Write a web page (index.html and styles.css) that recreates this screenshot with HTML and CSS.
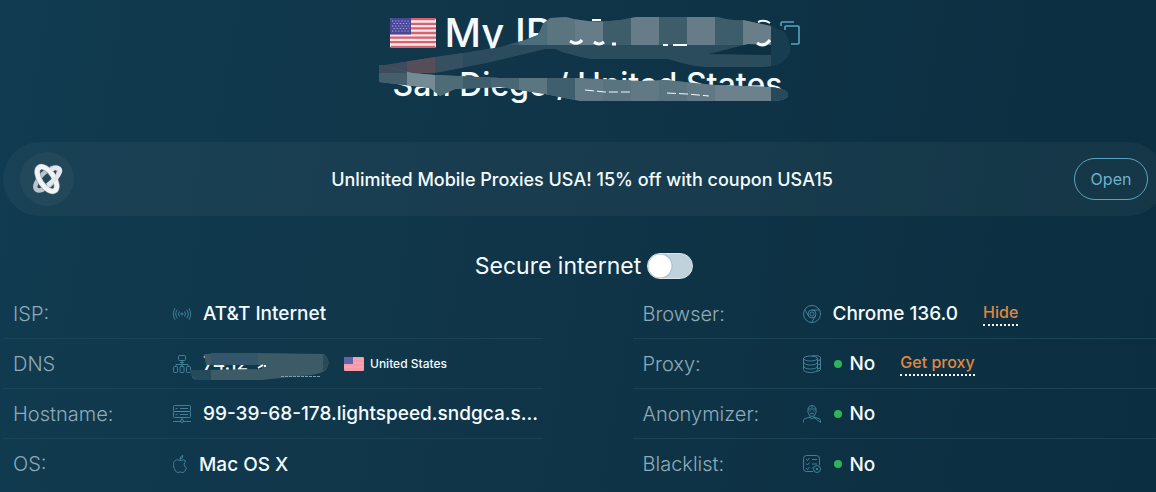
FILE: index.html
```html
<!DOCTYPE html>
<html lang="en">
<head>
    <meta charset="UTF-8">
    <meta name="viewport" content="width=device-width, initial-scale=1.0">
    <title>My IP</title>
    <link rel="stylesheet" href="styles.css">
</head>
<body>
    <svg class="defs" aria-hidden="true">
        <symbol id="flag" viewBox="0 0 46 30">
            <rect width="46" height="30" rx="2" fill="#f6e9ee"/>
            <path d="M1 1.2h44M0 5.8h46M0 10.4h46M0 15h46M0 19.6h46M0 24.2h46M1 28.8h44" stroke="#dc5f6c" stroke-width="2.3"/>
            <path d="M2 0h19v16.5H0V2Q0 0 2 0z" fill="#48479a"/>
            <path d="M2 3h18M3.500 5.500h16M2 8h18M3.500 10.500h16M2 13h18" stroke="#b9b8dc" stroke-width="1.100" stroke-dasharray="1.200 1.900"/>
        </symbol>
    </svg>
    <main class="page">
        <header class="hero">
            <h1 class="title">
                <svg class="flag" aria-hidden="true"><use href="#flag"/></svg>
                <span class="title-text">My IP</span>
                <button class="copy" type="button" aria-label="Copy">
                    <svg viewBox="0 0 20 24" fill="none" stroke="#5ba3bd" stroke-width="1.600">
                        <path d="M1 5V2q0-1 1-1h12M5 9V6q0-1 1-1h12q1 0 1 1v16q0 1-1 1h-7"/>
                    </svg>
                </button>
            </h1>
            <p class="location">San Diego / United States</p>
            <svg class="smear" viewBox="376 0 424 115" aria-hidden="true">
                <clipPath id="arm">
                    <path d="M379 66L435 57L470 52L500 47L522 41L538 35L543 24L550 18L566 17Q590 24 620 20L636 17H718Q732 21 743 20L771 26L784 32Q792 44 789 54Q782 67 760 67H705Q690 66 668 59H590Q565 54 555 49L545 49L491 62L435 73L379 75z"/>
                </clipPath>
                <clipPath id="band">
                    <path d="M379 65L412 73L435 75L500 78H580L640 81L665 80L715 85L771 87Q789 89 788 96Q786 101 771 101H580L545 94L500 87L455 89L440 96L430 88L379 82z"/>
                </clipPath>
                <g clip-path="url(#arm)">
                    <path d="M376 10h424v70H376z" fill="#2b4c5c"/>
                    <path d="M379 45h28v28h-28z" fill="#3c4c5c"/>
                    <path d="M407 45h28v28h-28z" fill="#574d59"/>
                    <path d="M435 45h28v28h-28z" fill="#345061"/>
                    <path d="M463 45h28v28h-28z" fill="#2c4b5e"/>
                    <path d="M491 17h28v28h-28z" fill="#365767"/>
                    <path d="M519 17h28v28h-28z" fill="#4c6d7a"/>
                    <path d="M547 17h28v28h-28z" fill="#5a7480"/>
                    <path d="M575 17h28v28h-28zM631 17h28v28h-28zM687 17h28v28h-28z" fill="#667d89"/>
                    <path d="M603 17h28v28h-28zM659 17h28v28h-28zM715 17h28v28h-28z" fill="#3e5d6b"/>
                    <path d="M743 17h28v28h-28z" fill="#687f8a"/>
                    <path d="M771 17h28v55h-28z" fill="#173d51"/>
                    <path d="M709 54L748 44L771 45V55z" fill="#0e3043"/>
                </g>
                <g clip-path="url(#band)">
                    <path d="M376 60h424v50H376z" fill="#617985"/>
                    <path d="M379 60h28v45h-28z" fill="#455e6b"/>
                    <path d="M379 60h28v13h-28z" fill="#3c4c5c"/>
                    <path d="M407 60h28v45h-28z" fill="#738b95"/>
                    <path d="M435 60h28v45h-28z" fill="#4e6c78"/>
                    <path d="M463 60h28v45h-28z" fill="#3e5e6c"/>
                    <path d="M491 60h28v45h-28z" fill="#496675"/>
                    <path d="M519 60h28v45h-28z" fill="#5b7581"/>
                    <path d="M547 60h28v45h-28z" fill="#405f6e"/>
                    <path d="M603 60h28v45h-28zM659 60h28v45h-28z" fill="#59737f"/>
                    <path d="M715 60h56v45h-56z" fill="#6b818c"/>
                    <path d="M771 60h28v45h-28z" fill="#28495a"/>
                </g>
                <g fill="none" stroke="#f4fbff">
                    <path d="M570 41l4 2q5 1 8-3M594 42q5 4 10 0M612 44h4M757 43q7 5 13-3" stroke-width="3"/>
                    <path d="M663 45h5M673 45h14M758 22q6-3 12 1M592 20h9" stroke-width="2"/>
                    <path d="M585 90l20 2l26-0M667 93l20 1l22 2" stroke-dasharray="9 3"/>
                </g>
            </svg>
        </header>

        <section class="promo">
            <span class="promo-logo">
                <svg viewBox="0 0 32 32" fill="none" aria-hidden="true">
                    <g transform="rotate(46 16 16)">
                        <ellipse cx="16" cy="16" rx="6.500" ry="15" stroke="#bcc4cb" stroke-width="4.500"/>
                    </g>
                    <g transform="rotate(-34 16 16)">
                        <ellipse cx="16" cy="16" rx="7" ry="14" stroke="#8d9ba6" stroke-width="6"/>
                        <ellipse cx="16" cy="16" rx="7" ry="14" stroke="#f1f3f6" stroke-width="4.800"/>
                    </g>
                    <path d="M16.500 22.500L25 15Q31 8 28 5.500Q25 3.500 20 7" stroke="#e3e7eb" stroke-width="4.500"/>
                </svg>
            </span>
            <p class="promo-text">Unlimited Mobile Proxies USA! 15% off with coupon USA15</p>
            <a class="open" href="#">Open</a>
        </section>

        <label class="secure">
            <span>Secure internet</span>
            <input class="toggle" type="checkbox" role="switch">
        </label>

        <div class="info">
            <dl class="list">
                <div class="row">
                    <dt>ISP:</dt>
                    <dd>
                        <svg class="icon" viewBox="0 0 18 18">
                            <circle cx="9" cy="9" r="1"/>
                            <path d="M6.500 6.500q-2 2.500 0 5M11.500 6.500q2 2.500 0 5M4.300 4.800q-3.200 4.200 0 8.400M13.700 4.800q3.200 4.200 0 8.400M2 3.300q-3.300 5.700 0 11.400M16 3.300q3.300 5.700 0 11.400"/>
                        </svg>
                        <span class="value">AT&amp;T Internet</span>
                    </dd>
                </div>
                <div class="row">
                    <dt>DNS</dt>
                    <dd>
                        <svg class="icon" viewBox="0 0 18 18">
                            <rect x="5.500" y=".5" width="7" height="5" rx="1"/>
                            <path d="M7 7.500h4M9 5.500v6M3 11.500v-2h12v2"/>
                            <rect x=".5" y="11.500" width="4" height="6" rx="1"/>
                            <rect x="7" y="11.500" width="4" height="6" rx="1"/>
                            <rect x="13.500" y="11.500" width="4" height="6" rx="1"/>
                        </svg>
                        <span class="dns">
                            <span class="value">74.12</span>
                            <svg class="dns-smear" viewBox="190 350 140 34" aria-hidden="true">
                                <path d="M204 355L258 354L324 355Q332 362 326 371Q320 376 300 377L262 381H200Q190 381 192 375L204 371L262 370V366L206 366z" fill="#3d5a67"/>
                                <path d="M211 354h47v12h-47z" fill="#34566a"/>
                                <path d="M190 371h21v10h-14q-7-4-7-10z" fill="#254a5c"/>
                                <path d="M323 355q11 8 0 18z" fill="#2a4a59"/>
                                <path d="M258 369l5-3M264 367h2" fill="none" stroke="#f4fbff" stroke-width="2"/>
                                <path d="M281 377.500h40" stroke="#7da0b0" stroke-dasharray="3 1"/>
                            </svg>
                        </span>
                        <svg class="flag-small" aria-hidden="true" viewBox="0 0 20 14">
                            <rect width="20" height="14" rx="1" fill="#f59aa8"/>
                            <path d="M0 2h20M0 6h20M0 10h20" stroke="#f4adba"/>
                            <path d="M0 0h9v7H0z" fill="#6462ad"/>
                        </svg>
                        <span class="country">United States</span>
                    </dd>
                </div>
                <div class="row">
                    <dt>Hostname:</dt>
                    <dd>
                        <svg class="icon" viewBox="0 0 18 18">
                            <rect x=".5" y=".5" width="17" height="6" rx="1"/>
                            <rect x=".5" y="6.500" width="17" height="6" rx="1"/>
                            <path d="M2.500 3.500h2M2.500 9.500h2M7 3.500h8M7 9.500h8M9 12.500v2M0 16.500h7.500M10.500 16.500H18"/>
                            <circle cx="9" cy="16" r="1.500"/>
                        </svg>
                        <span class="value">99-39-68-178.lightspeed.sndgca.s…</span>
                    </dd>
                </div>
                <div class="row">
                    <dt>OS:</dt>
                    <dd>
                        <svg class="icon icon-apple" viewBox="0 0 14 18">
                            <path d="M7 5.500C5 4.500 3.500 4.500 2.200 5.500C-.2 7.500.2 11.500 1.700 14.500C3 17 4 17.800 5.200 17.400Q7.200 16.500 9 17.400C10.300 17.800 11.300 17 12.300 15.300Q13.200 13.800 13.400 12.800Q11 11.500 11.100 9.200Q11.300 7.300 12.900 6.300Q10.900 3.700 7 5.500zM7 4.200Q6.800 1.300 9.800.5Q10 3.500 7 4.200z"/>
                        </svg>
                        <span class="value">Mac OS X</span>
                    </dd>
                </div>
            </dl>
            <dl class="list">
                <div class="row">
                    <dt>Browser:</dt>
                    <dd>
                        <svg class="icon" viewBox="0 0 18 18">
                            <circle cx="9" cy="9" r="8.500"/>
                            <circle cx="9" cy="9" r="4"/>
                            <circle cx="9" cy="9" r="2"/>
                            <path d="M9 5h7.500M5.500 11L1.800 4.700M12.500 11L8.500 17.500"/>
                        </svg>
                        <span class="value">Chrome 136.0</span>
                        <a class="action" href="#">Hide</a>
                    </dd>
                </div>
                <div class="row">
                    <dt>Proxy:</dt>
                    <dd>
                        <svg class="icon" viewBox="0 0 18 18">
                            <ellipse cx="7.500" cy="3.500" rx="7" ry="2.500"/>
                            <path d="M.5 3.500v11c0 4 14 4 14 0v-11M.5 7c0 4 14 4 14 0M.5 11c0 4 14 4 14 0M9 1q8-1 8.500 1.500v12q-1 2-4 2M14.500 6q3-.5 3-2M14.500 10q3-.5 3-2M14.500 14q3-.5 3-2"/>
                        </svg>
                        <span class="value status">No</span>
                        <a class="action" href="#">Get proxy</a>
                    </dd>
                </div>
                <div class="row">
                    <dt>Anonymizer:</dt>
                    <dd>
                        <svg class="icon" viewBox="0 0 18 18">
                            <path d="M5 3.500Q6 .5 9 .5t4 3v4Q12 11.500 9 11.500T5 7.500zM5 4h8M6.500 6h1.500M10 6h1.500M7 9q2-1.500 4 0M9 1v2M7 11v1.500l2 1.500 2-1.500V11M.5 17.500v-2Q1 13 4 13l3-.7M11 12.300l3 .7q3 0 3.500 2.500v2z"/>
                        </svg>
                        <span class="value status">No</span>
                    </dd>
                </div>
                <div class="row">
                    <dt>Blacklist:</dt>
                    <dd>
                        <svg class="icon" viewBox="0 0 18 18">
                            <path d="M10 16.500H3.500q-3 0-3-3v-10q0-3 3-3h10q3 0 3 3V10M3 4l1.500 1.500L6.500 3M3 8.500L4.500 10l2-2.500M3 13l1.500 1.500 2-2.500M9 4.500h5M9 9h5M9 13h1"/>
                            <circle cx="14" cy="14" r="3.500"/>
                            <path d="M12.800 12.800l2.400 2.400M15.200 12.800l-2.400 2.400"/>
                        </svg>
                        <span class="value status">No</span>
                    </dd>
                </div>
            </dl>
        </div>
    </main>
</body>
</html>
```

FILE: styles.css
```css
* {
    box-sizing: border-box;
}

body {
    margin: 0;
    min-height: 100vh;
    overflow: hidden;
    font-family: Inter, "Liberation Sans", sans-serif;
    color: #f4fbff;
    background: linear-gradient(100deg, #103b50 0%, #103548 45%, #0b2e40 100%);
}

h1, p, dl, dd {
    margin: 0;
}

.defs {
    position: absolute;
    width: 0;
    height: 0;
}

/* the page runs a little past the right edge of the window */
.page {
    margin: 0 -16px 0 3px;
}

.hero {
    position: relative;
    width: 424px;
    margin: 0 auto;
    padding-top: 9px;
}

.title {
    display: flex;
    align-items: center;
    height: 48px;
    padding-left: 14px;
    font-size: 40px;
    font-weight: 500;
    line-height: 48px;
}

.flag {
    width: 46px;
    height: 30px;
    margin-right: 9px;
}

.title-text {
    flex: 1;
}

.copy {
    width: 20px;
    height: 24px;
    padding: 0;
    border: 0;
    background: none;
    cursor: pointer;
}

.copy svg {
    display: block;
}

.location {
    margin-top: 8px;
    font-size: 32px;
    font-weight: 500;
    line-height: 40px;
    text-align: center;
    white-space: nowrap;
}

.smear {
    position: absolute;
    top: 0;
    left: 0;
    width: 424px;
    height: 115px;
    pointer-events: none;
}

.promo {
    display: flex;
    align-items: center;
    height: 74px;
    margin: 37px 7px 0 0;
    padding: 0 17px;
    border-radius: 37px;
    background: rgba(255, 255, 255, 0.04);
}

.promo-logo {
    display: flex;
    align-items: center;
    justify-content: center;
    width: 54px;
    height: 54px;
    border-radius: 50%;
    background: rgba(255, 255, 255, 0.04);
}

.promo-logo svg {
    width: 32px;
    height: 32px;
}

.promo-text {
    flex: 1;
    padding-left: 16px;
    font-size: 18px;
    font-weight: 500;
    text-align: center;
}

.open {
    width: 74px;
    height: 42px;
    border: 1px solid #5ba3bd;
    border-radius: 21px;
    font-size: 16px;
    line-height: 40px;
    text-align: center;
    text-decoration: none;
    color: #6fb0cb;
}

.secure {
    display: flex;
    align-items: center;
    justify-content: center;
    gap: 6px;
    height: 38px;
    margin: 31px 7px 4px 0;
    font-size: 23px;
    font-weight: 400;
}

.toggle {
    appearance: none;
    width: 46px;
    height: 26px;
    margin: 0;
    border: 1px solid #dbe6ec;
    border-radius: 13px;
    background: radial-gradient(circle at 12px 12px, #fff 11px, #a9bcc7 12px, #c0d2dc 13px);
    cursor: pointer;
}

.info {
    display: grid;
    grid-template-columns: 1fr 1fr;
    gap: 90px;
}

.list {
    min-width: 0;
}

.row {
    display: flex;
    align-items: center;
    height: 50px;
    padding-left: 10px;
    border-bottom: 1px solid #1b4356;
}

.row:last-child {
    border-bottom: 0;
}

dt {
    flex: 0 0 160px;
    font-size: 20px;
    font-weight: 300;
    color: #8eabb9;
}

dd {
    display: flex;
    align-items: center;
    min-width: 0;
    white-space: nowrap;
}

.icon {
    flex: none;
    width: 18px;
    height: 18px;
    margin-right: 12px;
    fill: none;
    stroke: #4f90a9;
    stroke-width: 0.8;
    overflow: visible;
}

.icon-apple {
    width: 14px;
}

.value {
    font-size: 19px;
    font-weight: 500;
}

.status::before {
    content: "";
    display: inline-block;
    width: 8px;
    height: 8px;
    margin: 0 8px 2px 1px;
    border-radius: 50%;
    vertical-align: middle;
    background: #2bb558;
}

.dns {
    position: relative;
    width: 141px;
}

.dns-smear {
    position: absolute;
    top: -3px;
    left: -13px;
    width: 140px;
    height: 34px;
}

.flag-small {
    width: 20px;
    height: 14px;
    margin-right: 6px;
}

.country {
    font-size: 12px;
    font-weight: 500;
}

.action {
    margin-left: 25px;
    padding-bottom: 2px;
    border-bottom: 2px dotted #fff;
    font-size: 16px;
    font-weight: 500;
    text-decoration: none;
    color: #e08840;
}
```
